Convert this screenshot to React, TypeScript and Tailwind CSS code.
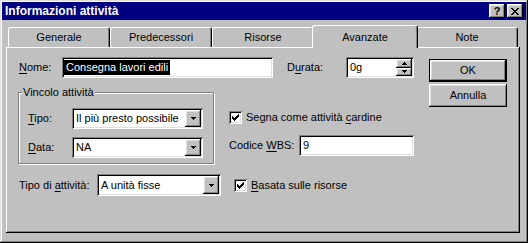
import type { ReactNode } from "react";

const raised =
  "shadow-[inset_-1px_-1px_#000,inset_1px_1px_#fff,inset_-2px_-2px_#808080,inset_2px_2px_#dfdfdf]";
const sunken =
  "shadow-[inset_1px_1px_#808080,inset_-1px_-1px_#fff,inset_2px_2px_#000,inset_-2px_-2px_#dfdfdf]";

function Key({ children }: { children: ReactNode }) {
  return <span className="underline underline-offset-[2px]">{children}</span>;
}

function DownArrow() {
  return (
    <svg width="5" height="3" viewBox="0 0 5 3" shapeRendering="crispEdges">
      <path d="M0 0h5v1h-5zM1 1h3v1h-3zM2 2h1v1h-1z" fill="#000" />
    </svg>
  );
}

function UpArrow() {
  return (
    <svg width="5" height="3" viewBox="0 0 5 3" shapeRendering="crispEdges">
      <path d="M2 0h1v1h-1zM1 1h3v1h-3zM0 2h5v1h-5z" fill="#000" />
    </svg>
  );
}

function CheckMark() {
  return (
    <svg width="7" height="7" viewBox="0 0 7 7" shapeRendering="crispEdges">
      <path
        d="M0 2h1v3h-1zM1 3h1v3h-1zM2 4h1v3h-1zM3 3h1v3h-1zM4 2h1v3h-1zM5 1h1v3h-1zM6 0h1v3h-1z"
        fill="#000"
      />
    </svg>
  );
}

function CloseGlyph() {
  return (
    <svg width="8" height="7" viewBox="0 0 8 7" shapeRendering="crispEdges">
      <path
        d="M0 0h2v1h-2zM6 0h2v1h-2zM1 1h2v1h-2zM5 1h2v1h-2zM2 2h4v1h-4zM3 3h2v1h-2zM2 4h4v1h-4zM1 5h2v1h-2zM5 5h2v1h-2zM0 6h2v1h-2zM6 6h2v1h-2z"
        fill="#000"
      />
    </svg>
  );
}

function Combo({ value, width, height = 21 }: { value: string; width: number; height?: number }) {
  return (
    <div
      className={`bg-white ${sunken} flex items-stretch p-[2px]`}
      style={{ width, height }}
    >
      <span className="flex-1 pl-[2px] flex items-center whitespace-nowrap overflow-hidden">{value}</span>
      <div className={`w-[16px] bg-[#c0c0c0] ${raised} flex items-center justify-center`}>
        <DownArrow />
      </div>
    </div>
  );
}

function CheckBox({ children }: { children: ReactNode }) {
  return (
    <div className="flex items-center gap-[4px]">
      <div className={`w-[13px] h-[13px] bg-white ${sunken} flex items-center justify-center`}>
        <CheckMark />
      </div>
      <span>{children}</span>
    </div>
  );
}

function Tab({ label }: { label: string }) {
  return (
    <div className="w-[102px] h-[20px] border-t border-l border-white border-r border-r-black rounded-t-[3px] shadow-[inset_-1px_0_#808080] flex items-center justify-center">
      {label}
    </div>
  );
}

export default function App() {
  return (
    <div className="w-[528px] h-[243px] bg-[#c0c0c0] p-[2px] font-['Liberation_Sans',Arial,sans-serif] text-[11px] leading-[13px] text-black shadow-[inset_-1px_-1px_#000,inset_1px_1px_#dfdfdf,inset_-2px_-2px_#808080,inset_2px_2px_#fff] flex flex-col select-none">
      {/* Title bar */}
      <div className="h-[18px] bg-[#000080] flex items-center pl-[3px] pr-[3px]">
        <span className="flex-1 text-white font-bold text-[12px]">Informazioni attività</span>
        <div className={`w-[16px] h-[14px] bg-[#c0c0c0] ${raised} flex items-center justify-center font-bold text-[11px] leading-none pt-[1px]`}>
          ?
        </div>
        <div className={`w-[16px] h-[14px] ml-[2px] bg-[#c0c0c0] ${raised} flex items-center justify-center`}>
          <CloseGlyph />
        </div>
      </div>

      {/* Tabs */}
      <div className="flex items-end mt-[5px] ml-[6px]">
        <Tab label="Generale" />
        <Tab label="Predecessori" />
        <Tab label="Risorse" />
        <div className="relative z-10 -mx-[2px] -mb-[1px] w-[106px] h-[23px] bg-[#c0c0c0] border-t border-l border-white border-r border-r-black rounded-t-[3px] shadow-[inset_-1px_0_#808080] flex items-start justify-center pt-[5px]">
          Avanzate
        </div>
        <Tab label="Note" />
      </div>

      {/* Panel */}
      <div className="ml-[4px] w-[514px] h-[186px] shadow-[inset_-1px_-1px_#000,inset_1px_1px_#fff,inset_-2px_-2px_#808080] flex">
        <div className="w-[408px] pl-[12px] pt-[10px] flex flex-col">
          {/* Row 1 */}
          <div className="flex items-center h-[21px]">
            <span className="w-[44px] pl-[1px]">
              <Key>N</Key>ome:
            </span>
            <div className={`w-[211px] h-[21px] bg-white ${sunken} flex items-center pl-[2px]`}>
              <span className="bg-black text-white px-[2px] h-[15px] leading-[15px]">Consegna lavori edili</span>
            </div>
            <span className="w-[59px] ml-[14px]">
              D<Key>u</Key>rata:
            </span>
            <div className={`w-[68px] h-[21px] bg-white ${sunken} flex p-[2px]`}>
              <span className="flex-1 pl-[2px] flex items-center">0g</span>
              <div className="w-[16px] flex flex-col">
                <div className={`flex-1 bg-[#c0c0c0] ${raised} flex items-center justify-center`}>
                  <UpArrow />
                </div>
                <div className={`flex-1 bg-[#c0c0c0] ${raised} flex items-center justify-center`}>
                  <DownArrow />
                </div>
              </div>
            </div>
          </div>

          {/* Row 2 */}
          <div className="flex mt-[14px]">
            <div className="relative w-[196px] h-[72px] border border-[#808080] shadow-[inset_1px_1px_#fff,1px_1px_#fff] pl-[9px] pt-[15px] flex flex-col gap-[8px]">
              <span className="absolute -top-[7px] left-[3px] bg-[#c0c0c0] px-[1px]">Vincolo attività</span>
              <div className="flex items-center">
                <span className="w-[44px]">
                  <Key>T</Key>ipo:
                </span>
                <Combo value="Il più presto possibile" width={131} />
              </div>
              <div className="flex items-center">
                <span className="w-[44px]">
                  <Key>D</Key>ata:
                </span>
                <Combo value="NA" width={131} />
              </div>
            </div>

            <div className="ml-[15px] pt-[19px] flex flex-col">
              <CheckBox>
                Segna come attività <Key>c</Key>ardine
              </CheckBox>
              <div className="flex items-center mt-[11px]">
                <span className="w-[70px]">
                  Codice <Key>W</Key>BS:
                </span>
                <div className={`w-[115px] h-[21px] bg-white ${sunken} flex items-center pl-[4px]`}>9</div>
              </div>
            </div>
          </div>

          {/* Row 3 */}
          <div className="flex items-center mt-[10px]">
            <span className="w-[79px] pl-[1px]">
              Tipo di <Key>a</Key>ttività:
            </span>
            <Combo value="A unità fisse" width={124} height={22} />
            <div className="ml-[13px]">
              <CheckBox>
                <Key>B</Key>asata sulle risorse
              </CheckBox>
            </div>
          </div>
        </div>

        {/* Buttons */}
        <div className="ml-[15px] pt-[12px] flex flex-col gap-[2px]">
          <div className="w-[78px] h-[23px] border border-black">
            <div className={`w-full h-full ${raised} flex items-center justify-center`}>OK</div>
          </div>
          <div className={`w-[78px] h-[23px] ${raised} flex items-center justify-center`}>Annulla</div>
        </div>
      </div>
    </div>
  );
}
